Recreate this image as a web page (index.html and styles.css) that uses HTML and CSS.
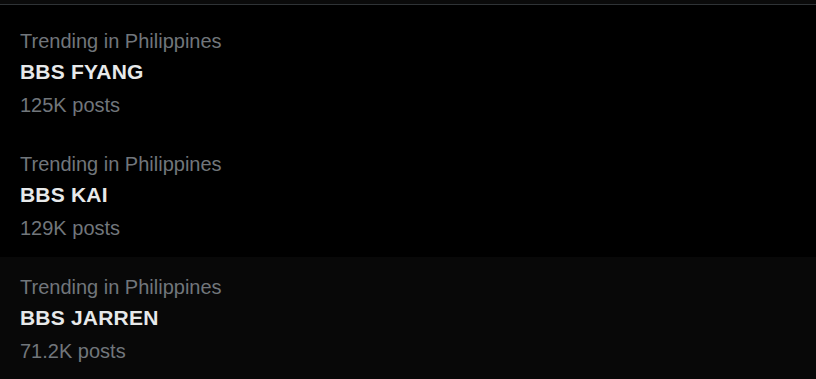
FILE: index.html
```html
<!DOCTYPE html>
<html lang="en">
<head>
<meta charset="utf-8">
<title>Trending</title>
<link rel="stylesheet" href="styles.css">
</head>
<body>
<div class="top"></div>
<section class="trends">
  <div class="trend">
    <div class="meta">Trending in Philippines</div>
    <div class="name">BBS FYANG</div>
    <div class="count">125K posts</div>
  </div>
  <div class="trend">
    <div class="meta">Trending in Philippines</div>
    <div class="name">BBS KAI</div>
    <div class="count">129K posts</div>
  </div>
  <div class="trend hover">
    <div class="meta">Trending in Philippines</div>
    <div class="name">BBS JARREN</div>
    <div class="count">71.2K posts</div>
  </div>
</section>
</body>
</html>
```
FILE: styles.css
```css
html, body {
  margin: 0;
  padding: 0;
  background: #000;
  font-family: "Liberation Sans", Arial, sans-serif;
}
.top {
  height: 4px;
  background: #0a0a0a;
  border-bottom: 1px solid #2f3336;
}
.trends {
  padding-top: 6px;
}
.trend {
  padding: 14px 20px 13px;
}
.trend.hover {
  background: #080808;
}
.meta, .count {
  font-size: 20px;
  line-height: 32px;
  color: #71767b;
}
.name {
  font-size: 21px;
  line-height: 30px;
  margin-bottom: 2px;
  font-weight: 700;
  color: #e7e9ea;
  letter-spacing: 0.2px;
}
```
